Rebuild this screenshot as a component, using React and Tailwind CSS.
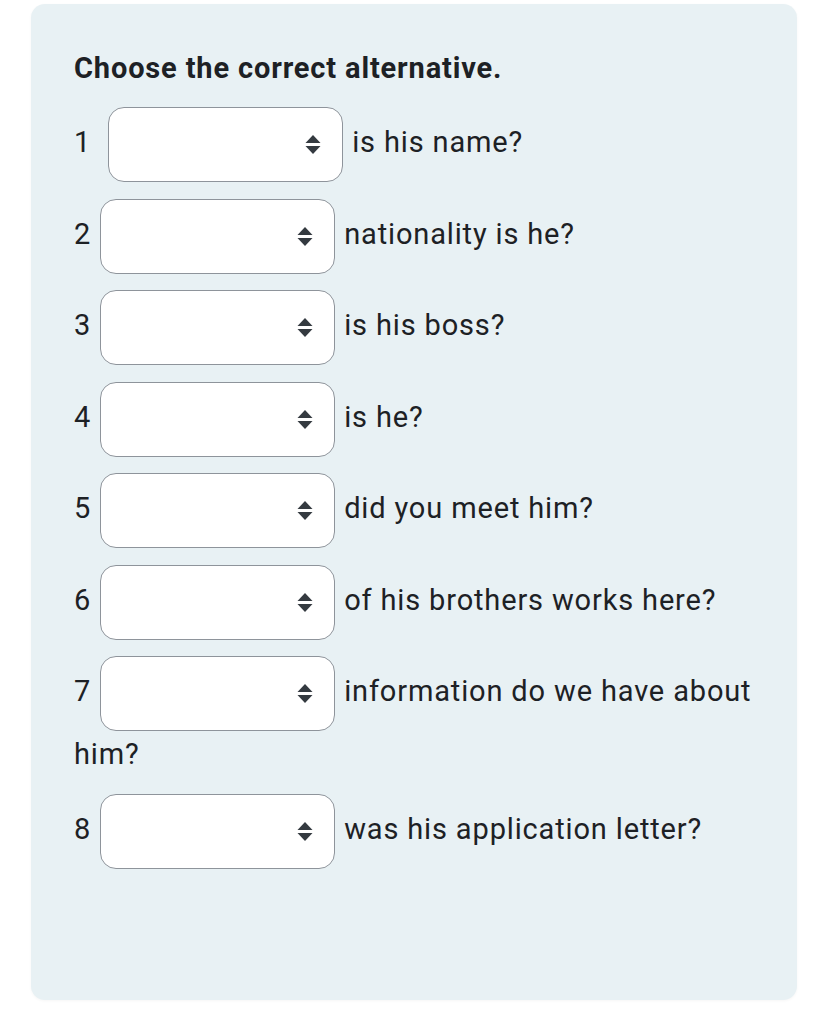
import React from 'react';

const questions = [
    { n: '1', space: true, text: 'is his name?' },
    { n: '2', text: 'nationality is he?' },
    { n: '3', text: 'is his boss?' },
    { n: '4', text: 'is he?' },
    { n: '5', text: 'did you meet him?' },
    { n: '6', text: 'of his brothers works here?' },
    { n: '7', text: 'information do we have about him?' },
    { n: '8', text: 'was his application letter?' },
];

// up/down caret like a native select
const Arrows = () => (
    <svg width="16" height="19" viewBox="0 0 16 19" className="shrink-0">
        <path d="M8 0L15.5 8H0.5z" fill="#343a40" />
        <path d="M8 19L15.5 11H0.5z" fill="#343a40" />
    </svg>
);

const FakeSelect = () => (
    <span className="inline-flex items-center justify-end align-middle w-[235px] h-[75px] bg-white border-[1.5px] border-[#8e949b] rounded-[16px] pr-[21px] ml-[9px] mr-[9px]">
        <Arrows />
    </span>
);

export default function App() {
    return (
        <div className="min-h-screen bg-white pt-[4px] pl-[31px]" style={{ fontFamily: 'Roboto, "Liberation Sans", sans-serif' }}>
            <div className="w-[766px] h-[996px] bg-[#e8f1f4] rounded-[14px] shadow-[0_1px_3px_rgba(0,0,0,0.04)] pl-[43px] pr-[40px] pt-[47px] text-[#1d2125] tracking-[0.85px]">
                <h2 className="text-[29px] font-bold leading-[34px] mb-[22px]">Choose the correct alternative.</h2>
                {questions.map(q => (
                    <p key={q.n} className="text-[29px] leading-[46px] mb-[16.5px]">
                        {q.n}{q.space ? ' ' : ''}
                        <FakeSelect />
                        {q.text}
                    </p>
                ))}
            </div>
        </div>
    );
}
